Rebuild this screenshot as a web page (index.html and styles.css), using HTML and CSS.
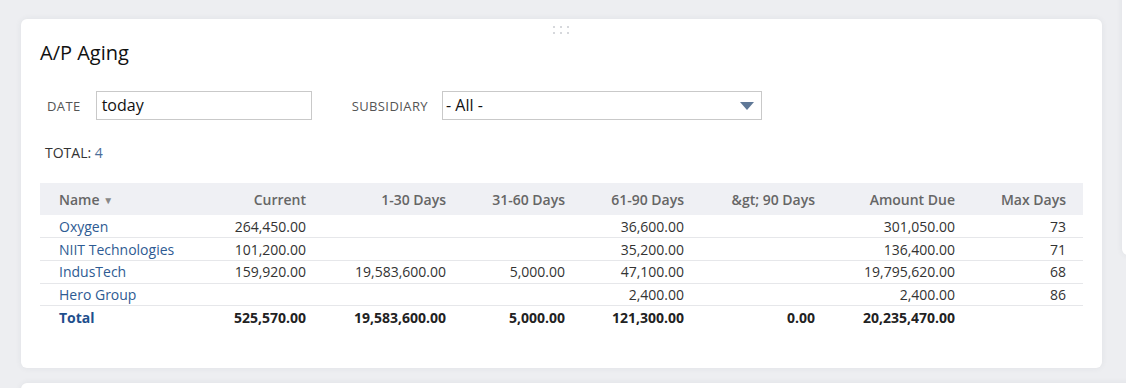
FILE: index.html
```html
<!DOCTYPE html>
<html lang="en">
<head>
<meta charset="utf-8">
<title>A/P Aging</title>
<link rel="stylesheet" href="styles.css">
</head>
<body>
<div class="dashboard">
  <section class="card portlet">
    <div class="drag-handle"><span></span><span></span><span></span><span></span><span></span><span></span></div>
    <h2 class="title">A/P Aging</h2>
    <div class="filters">
      <label class="flabel flabel-date">DATE</label>
      <div class="field field-date">today</div>
      <label class="flabel flabel-sub">SUBSIDIARY</label>
      <div class="field field-select">- All -
        <svg class="caret" width="14" height="8" viewBox="0 0 14 8"><path d="M0 0 H14 L7 8 Z" fill="#5f7897"/></svg>
      </div>
    </div>
    <div class="total-count">TOTAL: <span class="count">4</span></div>
    <table class="aging">
      <colgroup>
        <col class="c-name"><col class="c-cur"><col class="c-130"><col class="c-3160"><col class="c-6190"><col class="c-90"><col class="c-due"><col class="c-max"><col class="c-pad">
      </colgroup>
      <thead>
        <tr>
          <th class="name">Name <span class="sort">&#9660;</span></th>
          <th>Current</th>
          <th>1-30 Days</th>
          <th>31-60 Days</th>
          <th>61-90 Days</th>
          <th>&amp;gt; 90 Days</th>
          <th>Amount Due</th>
          <th>Max Days</th>
          <th></th>
        </tr>
      </thead>
      <tbody>
        <tr>
          <td class="name">Oxygen</td><td>264,450.00</td><td></td><td></td><td>36,600.00</td><td></td><td>301,050.00</td><td>73</td><td></td>
        </tr>
        <tr>
          <td class="name">NIIT Technologies</td><td>101,200.00</td><td></td><td></td><td>35,200.00</td><td></td><td>136,400.00</td><td>71</td><td></td>
        </tr>
        <tr>
          <td class="name">IndusTech</td><td>159,920.00</td><td>19,583,600.00</td><td>5,000.00</td><td>47,100.00</td><td></td><td>19,795,620.00</td><td>68</td><td></td>
        </tr>
        <tr>
          <td class="name">Hero Group</td><td></td><td></td><td></td><td>2,400.00</td><td></td><td>2,400.00</td><td>86</td><td></td>
        </tr>
        <tr class="totals">
          <td class="name">Total</td><td>525,570.00</td><td>19,583,600.00</td><td>5,000.00</td><td>121,300.00</td><td>0.00</td><td>20,235,470.00</td><td></td><td></td>
        </tr>
      </tbody>
    </table>
  </section>
  <section class="card side"></section>
  <section class="card below"></section>
</div>
</body>
</html>
```

FILE: styles.css
```css
* { box-sizing: border-box; }
html, body { margin: 0; padding: 0; }
body {
  background: #edeef1;
  font-family: "Open Sans", "Noto Sans", "Liberation Sans", sans-serif;
  color: #333;
  overflow: hidden;
}
.dashboard {
  display: grid;
  grid-template-columns: 1081px 100px;
  column-gap: 20px;
  row-gap: 15px;
  padding: 19px 0 0 21px;
}
.card {
  background: #fff;
  border-radius: 6px;
  box-shadow: 0 0 6px rgba(40, 50, 70, 0.07);
}
.portlet {
  position: relative;
  height: 349px;
  padding: 22px 19px 0 19px;
}
.side {
  margin-top: -40px;
  height: 276px;
}
.below {
  grid-column: 1 / span 2;
  height: 40px;
}
.drag-handle {
  position: absolute;
  top: 7px;
  left: 532px;
  display: grid;
  grid-template-columns: repeat(3, 2px);
  column-gap: 5px;
  row-gap: 4px;
}
.drag-handle span {
  width: 2px;
  height: 2px;
  background: #d6d8dc;
}
.title {
  margin: 0;
  font-size: 20px;
  line-height: 24px;
  font-weight: 400;
  color: #111;
}
.filters {
  display: flex;
  align-items: center;
  margin-top: 26px;
  padding-left: 7px;
  height: 29px;
}
.flabel {
  font-size: 13px;
  color: #555;
  letter-spacing: 0.4px;
}
.flabel-date { margin-right: 15px; }
.flabel-sub { margin-left: 40px; margin-right: 14px; }
.field {
  height: 29px;
  border: 1px solid #c9c9c9;
  font-size: 16px;
  line-height: 27px;
  color: #111;
  padding-left: 5px;
}
.field-date { width: 216px; }
.field-select {
  width: 320px;
  display: flex;
  justify-content: space-between;
  align-items: center;
  padding-left: 3px;
  padding-right: 7px;
}
.caret { display: block; }
.total-count {
  margin-top: 23px;
  padding-left: 5px;
  font-size: 14px;
  line-height: 20px;
  color: #333;
}
.count { color: #4a6d99; }
.aging {
  margin-top: 20px;
  width: 1043px;
  border-collapse: collapse;
  table-layout: fixed;
  font-size: 14px;
}
.c-name { width: 150px; }
.c-cur { width: 116px; }
.c-130 { width: 140px; }
.c-3160 { width: 119px; }
.c-6190 { width: 119px; }
.c-90 { width: 131px; }
.c-due { width: 140px; }
.c-max { width: 111px; }
.c-pad { width: 17px; }
.aging th {
  background: #eff0f4;
  height: 32px;
  font-weight: 600;
  color: #666;
  text-align: right;
  padding: 0;
  white-space: nowrap;
}
.aging td {
  height: 22.7px;
  padding: 0;
  text-align: right;
  color: #333;
  border-bottom: 1px solid #e6e7ea;
  white-space: nowrap;
  overflow: visible;
}
.aging .name {
  text-align: left;
  padding-left: 19px;
}
.aging td.name { color: #2e5b93; }
.sort {
  font-size: 10px;
  color: #888;
  position: relative;
  top: -1px;
}
.aging tr.totals td {
  font-weight: 700;
  color: #222;
  border-bottom: none;
}
.aging tr.totals td.name { color: #1f4f8d; }
```
